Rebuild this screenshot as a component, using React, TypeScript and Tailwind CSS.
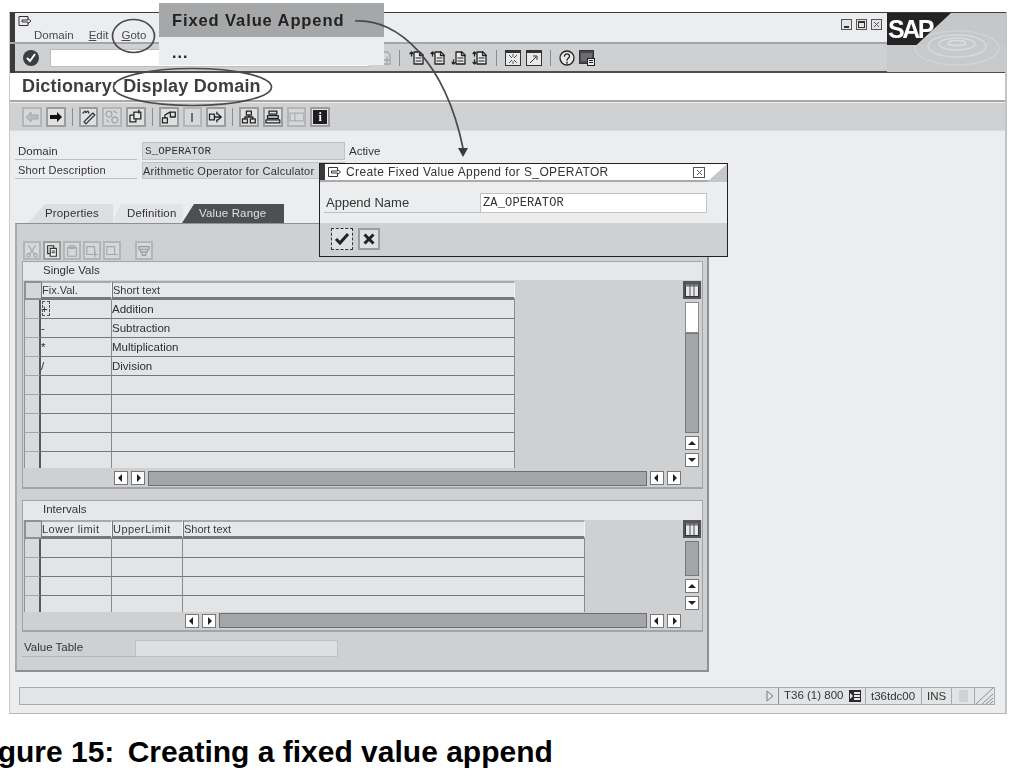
import React from "react";

const S = ({ children, c = "#333", w = 16, h = 16 }: { children: React.ReactNode; c?: string; w?: number; h?: number }) => (
  <svg width={w} height={h} viewBox="0 0 16 16" fill="none" stroke={c} strokeWidth="1.3" strokeLinejoin="round" strokeLinecap="round">
    {children}
  </svg>
);

const Btn = ({ children, dim, small }: { children?: React.ReactNode; dim?: boolean; small?: boolean }) => (
  <div className={`${small ? "w-[18px] h-[19px]" : "w-[19.75px] h-[20px]"} shrink-0 border-2 flex items-center justify-center ${dim ? "border-[#b4b5b7] bg-[#d6d7d9]" : "border-[#9c9d9f] bg-[#dfe0e2]"}`}>
    {children}
  </div>
);

const Sep = () => <div className="w-px h-[18px] mx-[2px] bg-[#8c8d8f] shrink-0" />;

const Tri = ({ dir }: { dir: "l" | "r" | "u" | "d" }) => {
  const p = { l: "6,1 6,9 2,5", r: "4,1 4,9 8,5", u: "1,7 9,7 5,3", d: "1,3 9,3 5,7" }[dir];
  return (
    <svg width="10" height="10" viewBox="0 0 10 10">
      <polygon points={p} fill="#222" />
    </svg>
  );
};

const ScrollBtn = ({ dir }: { dir: "l" | "r" | "u" | "d" }) => (
  <div className="w-[14px] h-[14px] shrink-0 bg-white border border-[#77787a] flex items-center justify-center">
    <Tri dir={dir} />
  </div>
);

const ColBtn = () => (
  <div className="w-[18px] h-[18px] bg-[#d6d7d9] border-2 border-[#55565a] flex items-center justify-center">
    <svg width="14" height="14" viewBox="0 0 14 14">
      <rect x="0.5" y="0.5" width="13" height="13" fill="#e8e9eb" stroke="#333" />
      <rect x="0.5" y="0.5" width="13" height="3" fill="#777" />
      <path d="M5 1v12M9 1v12" stroke="#555" />
    </svg>
  </div>
);

const HScroll = ({ left }: { left: string }) => (
  <div className={`h-[20px] flex items-center gap-[3px] pr-[21px] pb-[1px] ${left}`}>
    <ScrollBtn dir="l" />
    <ScrollBtn dir="r" />
    <div className="flex-1 h-[15px] bg-[#a3a5a7] border border-[#6d6e70]" />
    <ScrollBtn dir="l" />
    <ScrollBtn dir="r" />
  </div>
);

const VScroll = ({ thumb, track }: { thumb: number; track: number }) => (
  <div className="ml-auto mr-[1px] w-[18px] flex flex-col items-center">
    <ColBtn />
    <div className="h-[3px]" />
    {thumb > 0 && <div className="w-[14px] bg-white border border-[#8a8b8d]" style={{ height: thumb }} />}
    <div className="w-[14px] bg-[#a3a5a7] border border-[#77787a]" style={{ height: track }} />
    <div className="h-[3px] shrink-0" />
    <ScrollBtn dir="u" />
    <div className="h-[3px] shrink-0" />
    <ScrollBtn dir="d" />
  </div>
);

const Table = ({ cols, head, rows, height, headTrack = "" }: { cols: string[]; head: string[]; rows: string[][]; height: string; headTrack?: string }) => (
  <div className={`ml-[1px] overflow-hidden ${height}`}>
    <div className="flex h-[19px]">
      <div className="w-[17px] bg-[#d5d6d8] border-2 border-r-0 border-[#8f9092] shrink-0" />
      {head.map((h, i) => (
        <div key={h} className={`${cols[i]} shrink-0 bg-[#e6e7e9] border-t-2 border-t-[#a9aaac] border-l border-l-[#77787a] border-r border-r-[#f4f4f6] border-b-[3px] border-b-[#77787a] text-[11px] leading-[14px] text-[#3a3a3a] ${h === "Short text" ? "" : headTrack}`}>
          {h}
        </div>
      ))}
    </div>
    {rows.map((r, ri) => (
      <div key={ri} className="flex h-[19px]">
        <div className="w-[17px] shrink-0 bg-[#d9dadc] border-l border-l-[#8f9092] border-r-2 border-r-[#58595b] border-b border-b-[#a5a6a8]" />
        {r.map((c, ci) => (
          <div key={ci} className={`${cols[ci]} shrink-0 bg-[#e3e4e6] border-b border-b-[#77787a] border-r border-r-[#8a8b8d] text-[11.5px] leading-[18px] text-[#2e2e2e] whitespace-pre`}>
            {c}
          </div>
        ))}
      </div>
    ))}
  </div>
);

const Logo = () => (
  <div className="absolute left-[877px] top-0 w-[119px] h-[59px] overflow-hidden">
    <div className="absolute left-0 right-0 top-0 h-[31px] bg-[#c6c7c9]" />
    <div className="absolute left-0 right-0 top-[31px] bottom-0 bg-[#c8c9cb]" />
    <svg className="absolute inset-0" width="119" height="59" viewBox="0 0 119 59" fill="none" stroke="#dcdde0">
      <ellipse cx="70" cy="30" rx="9" ry="2.5" strokeWidth="1.4" />
      <ellipse cx="70" cy="31" rx="18" ry="6" strokeWidth="1.4" opacity="0.9" />
      <ellipse cx="70" cy="33" rx="29" ry="11" strokeWidth="1.4" opacity="0.75" />
      <ellipse cx="70" cy="35" rx="42" ry="17" strokeWidth="1.4" opacity="0.5" />
    </svg>
    <div className="absolute left-0 top-0 w-[64px] h-[32px] bg-[#232325] [clip-path:polygon(0_0,100%_0,46%_100%,0_100%)]" />
    <div className="absolute left-[1px] top-0 text-white font-bold text-[25px] leading-[32px] tracking-[-2.5px]">SAP</div>
  </div>
);

const singleRows = [["+", "Addition"], ["-", "Subtraction"], ["*", "Multiplication"], ["/", "Division"], ["", ""], ["", ""], ["", ""], ["", ""], ["", ""]];
const intervalRows = [["", "", ""], ["", "", ""], ["", "", ""], ["", "", ""]];

const Cmd = ({ up, down }: { up?: boolean; down?: boolean }) => (
  <S c="#222">
    <path d="M5 2h6l3 3v9H5z" fill="#e8e9eb" />
    <path d="M10.5 2v3.5H14" />
    {up && <path d="M2.5 6V2M1 3.5l1.5-1.5 1.5 1.5" />}
    {down && <path d="M2.5 10v4M1 12.5L2.5 14 4 12.5" />}
    <path d="M7 8h5M7 11h5" strokeWidth="1" />
  </S>
);

export default function App() {
  return (
    <div className="relative w-[1016px] h-[783px] overflow-hidden bg-white font-['Liberation_Sans',Arial,sans-serif]">
      <div className="pt-[12px] pl-[9px] blur-[0.4px]">
        <div className="relative w-[998px] h-[702px] flex flex-col border-t border-t-[#3d3d3f] border-r-2 border-r-[#c2c3c5] border-l border-l-[#c8c9cb] border-b border-b-[#b5b6b8] bg-[#ecedef]">
          {/* menu bar */}
          <div className="h-[31px] flex bg-[#ecedef] border-b-2 border-b-[#a3a4a6] shrink-0">
            <div className="w-[5px] bg-[#3a3a3c] shrink-0" />
            <div className="pl-[3px] flex-1">
              <div className="h-[14px] pt-[3px]">
                <svg width="14" height="11" viewBox="0 0 14 11" fill="none" stroke="#333" strokeWidth="1">
                  <path d="M1 .5h9v3M1 .5v9h9V7" />
                  <path d="M4 4h6V2.5L13 5l-3 2.5V6H4z" fill="#ecedef" />
                </svg>
              </div>
              <div className="flex text-[11.5px] leading-[15px] mt-[1px] text-[#4a4a4a] ml-[16px]">
                <span>Domain</span>
                <span className="ml-[15px]"><u>E</u>dit</span>
                <span className="ml-[13px]"><u>G</u>oto</span>
              </div>
            </div>
            <div className="flex gap-[4px] pt-[6px] pr-[123px]">
              {["min", "max", "x"].map((k) => (
                <div key={k} className="w-[11px] h-[11px] border border-[#555] bg-[#e3e4e6] relative flex items-center justify-center">
                  {k === "min" && <div className="absolute bottom-[1px] left-[2px] w-[5px] h-[2px] bg-[#333]" />}
                  {k === "max" && <div className="w-[7px] h-[7px] border border-[#333] border-t-2" />}
                  {k === "x" && (
                    <svg width="7" height="7" viewBox="0 0 7 7" stroke="#555"><path d="M1 1l5 5M6 1L1 6" /></svg>
                  )}
                </div>
              ))}
            </div>
          </div>

          {/* system toolbar */}
          <div className="h-[29px] flex items-center bg-[#cfd0d2] border-b-2 border-b-[#4c4d4f] shrink-0 relative">
            <div className="absolute left-0 top-0 bottom-[-2px] w-[5px] bg-[#3a3a3c]" />
            <div className="ml-[13px] w-[16px] h-[16px] rounded-full bg-[#3c3d3f] flex items-center justify-center">
              <svg width="12" height="12" viewBox="0 0 12 12" fill="none" stroke="#fff" strokeWidth="2"><path d="M2 6l3 3 5-7" /></svg>
            </div>
            <div className="ml-[11px] w-[320px] h-[18px] bg-white border border-[#bbbcbe]" />
            <div className="ml-[6px]">
              <S c="#a5a6a8"><path d="M5 2h6l3 3v9H5z" fill="#d6d7d9" /><path d="M11 7v6M8.5 10H13.5" /></S>
            </div>
            <div className="w-px h-[16px] bg-[#8c8d8f] ml-[7px]" />
            <div className="flex gap-[5px] ml-[9px]">
              <Cmd up />
              <Cmd up />
              <Cmd down />
              <Cmd up down />
            </div>
            <div className="w-px h-[16px] bg-[#8c8d8f] ml-[8px]" />
            <div className="flex gap-[5px] ml-[8px]">
              <div className="w-[16px] h-[16px] border border-[#333] bg-[#e8e9eb] border-t-[3px] flex items-center justify-center">
                <svg width="10" height="10" viewBox="0 0 10 10" stroke="#555"><path d="M1 1l3 3M9 1L6 4M1 9l3-3M9 9L6 6M5 0v3M5 7v3" /></svg>
              </div>
              <div className="w-[16px] h-[16px] border border-[#333] bg-[#e8e9eb] border-t-[3px] flex items-center justify-center">
                <svg width="10" height="10" viewBox="0 0 10 10" stroke="#333" fill="none"><path d="M1 9l6-6M4 2h4v4" /></svg>
              </div>
            </div>
            <div className="w-px h-[16px] bg-[#8c8d8f] ml-[8px]" />
            <div className="flex gap-[4px] ml-[8px]">
              <S c="#222">
                <circle cx="8" cy="8" r="7" fill="#e8e9eb" />
                <path d="M5.5 6.2c0-3.2 5-3.2 5 0 0 2-2.5 2-2.5 4" />
                <path d="M8 12.2v1" />
              </S>
              <svg width="16" height="16" viewBox="0 0 16 16">
                <rect x="0.5" y="0.5" width="14" height="13" fill="#4a4b4d" stroke="#333" />
                <rect x="2" y="3" width="11" height="8" fill="#6c6d6f" />
                <rect x="8.5" y="8.5" width="7" height="7" fill="#e8e9eb" stroke="#222" />
                <path d="M10 10.5h4M10 12.5h4" stroke="#222" />
              </svg>
            </div>
          </div>

          {/* title */}
          <div className="h-[29px] bg-white border-b-2 border-b-[#a6a7a9] pl-[12px] text-[18px] font-bold leading-[26px] tracking-[0.18px] text-[#3e3e40] shrink-0">
            Dictionary: Display Domain
          </div>

          {/* app toolbar */}
          <div className="h-[28px] flex items-center gap-[4px] bg-[#d0d1d3] pl-[12px] border-b border-b-[#d9dadc] shrink-0 mt-px">
            <Btn dim>
              <svg width="14" height="12" viewBox="0 0 14 12"><polygon points="1,6 6,1 6,4 13,4 13,8 6,8 6,11" fill="#bbbcbe" stroke="#a5a6a8" /></svg>
            </Btn>
            <Btn>
              <svg width="14" height="12" viewBox="0 0 14 12"><polygon points="13,6 8,1 8,4 1,4 1,8 8,8 8,11" fill="#111" /></svg>
            </Btn>
            <Sep />
            <Btn>
              <S c="#333"><path d="M3 13l9-9 2 2-9 9zM2 4l2-2 1 1.5L7 2l1 2" /></S>
            </Btn>
            <Btn dim>
              <S c="#a5a6a8"><circle cx="5" cy="5" r="3" /><circle cx="11" cy="11" r="3" /><path d="M10 2l3 2M3 11l2 2" /></S>
            </Btn>
            <Btn>
              <S c="#222"><rect x="2" y="6" width="6" height="7" fill="#e8e9eb" /><rect x="6" y="3" width="7" height="7" fill="#e8e9eb" /><path d="M11 1v3" /></S>
            </Btn>
            <Sep />
            <Btn>
              <S c="#222"><rect x="1.5" y="9" width="5" height="5" /><rect x="9.5" y="3" width="5" height="5" /><path d="M4 9V6l5-3" /></S>
            </Btn>
            <Btn dim>
              <svg width="4" height="12" viewBox="0 0 4 12"><path d="M2 2v9" stroke="#555" strokeWidth="1.6" /></svg>
            </Btn>
            <Btn>
              <S c="#222"><rect x="1.5" y="5" width="5" height="6" /><path d="M6.5 8H13M10 5l3.5 3-3.5 3M9 3v2M9 11v2" /></S>
            </Btn>
            <Sep />
            <Btn>
              <S c="#222"><rect x="5.5" y="2" width="5" height="4" /><rect x="1.5" y="10" width="5" height="4" /><rect x="9.5" y="10" width="5" height="4" /><path d="M8 6v2M4 10V8h8v2" /></S>
            </Btn>
            <Btn>
              <S c="#222"><rect x="4" y="2" width="8" height="3" /><rect x="2.5" y="6.5" width="11" height="3" /><rect x="1" y="11" width="14" height="3" /></S>
            </Btn>
            <Btn dim>
              <S c="#aeafb1"><rect x="1" y="4" width="14" height="8" /><path d="M6 4v8" /></S>
            </Btn>
            <Btn>
              <div className="w-[14px] h-[14px] bg-[#1e1e20] flex items-center justify-center text-white text-[12px] font-bold leading-none font-['Liberation_Serif',serif]">i</div>
            </Btn>
          </div>

          {/* content */}
          <div className="flex-1 flex flex-col pl-[5px] pt-[11px] bg-[#ecedef] text-[#333]">
            <div className="flex h-[18px] w-[400px]">
              <div className="w-[122px] pl-[3px] text-[11.5px] leading-[18px] border-b border-b-[#bdbec0] mr-[5px] shrink-0">Domain</div>
              <div className="w-[203px] shrink-0 bg-[#d8d9db] border border-[#c0c1c3] pl-[2px] font-['Liberation_Mono',monospace] text-[11px] leading-[16px]">S_OPERATOR</div>
              <div className="ml-[4px] text-[11.5px] leading-[18px]">Active</div>
            </div>
            <div className="flex h-[17px] mt-[2px]">
              <div className="w-[122px] pl-[3px] text-[11px] leading-[17px] tracking-[0.2px] border-b border-b-[#bdbec0] mr-[5px] shrink-0 whitespace-nowrap">Short Description</div>
              <div className="w-[203px] shrink-0 bg-[#d8d9db] border border-[#c0c1c3] text-[11px] leading-[17px] tracking-[0.22px] whitespace-nowrap overflow-hidden">Arithmetic Operator for Calculator</div>
            </div>

            {/* tabs */}
            <div className="flex h-[19px] mt-[25px] pl-[13px] text-[11.5px] leading-[19px] tracking-[0.15px] shrink-0">
              <div className="w-[85px] pl-[17px] bg-[#dddee0] [clip-path:polygon(17px_0,100%_0,100%_100%,0_100%)] text-[#333]">Properties</div>
              <div className="w-[71px] pl-[15px] -ml-[1px] bg-[#e3e4e6] [clip-path:polygon(9px_0,100%_0,100%_100%,0_100%)] text-[#333]">Definition</div>
              <div className="w-[102px] -ml-[1px] pl-[17px] bg-[#4e4f51] [clip-path:polygon(12px_0,100%_0,100%_100%,0_100%)] text-[#dfe0e2]">Value Range</div>
            </div>

            {/* panel */}
            <div className="w-[694px] h-[449px] bg-[#cfd0d2] border-t border-t-[#8f9092] border-l-2 border-l-[#a9aaac] border-r-2 border-r-[#8f9092] border-b-2 border-b-[#8f9092] shrink-0">
              <div className="flex gap-[2px] pt-[17px] pl-[6px] h-[37px]">
                <Btn small dim><S c="#a5a6a8"><path d="M4 2l7 10M12 2L5 12" /><circle cx="4" cy="13" r="2" /><circle cx="12" cy="13" r="2" /></S></Btn>
                <Btn small><S c="#333"><rect x="3" y="2" width="7" height="9" /><rect x="6" y="5" width="7" height="9" fill="#fff" /><path d="M8 8h3M8 10h3" /></S></Btn>
                <Btn small dim><S c="#a5a6a8"><rect x="3" y="4" width="10" height="10" /><rect x="5" y="2" width="6" height="3" /></S></Btn>
                <Btn small dim><S c="#a5a6a8"><rect x="2" y="3" width="9" height="9" /><path d="M9 12h5M11.5 9.5v5" /></S></Btn>
                <Btn small dim><S c="#a5a6a8"><rect x="2" y="3" width="9" height="9" /><path d="M9 12h5" /></S></Btn>
                <div className="ml-[12px]">
                  <Btn small dim><S c="#98999b"><path d="M2 3h12v3H2zM4 6h8v3H4zM6 9h4v4H6z" /></S></Btn>
                </div>
              </div>

              {/* single vals */}
              <div className="ml-[5px] w-[681px] h-[228px] border-t border-x border-b-2 border-[#a3a4a6] flex flex-col">
                <div className="h-[18px] bg-[#e6e7e9] pl-[20px] text-[11.5px] leading-[17px] shrink-0">Single Vals</div>
                <div className="flex h-[189px] pt-[1px] shrink-0">
                  <Table cols={["w-[71px]", "w-[403px]"]} head={["Fix.Val.", "Short text"]} rows={singleRows} height="h-[187px]" />
                  <VScroll thumb={31} track={100} />
                </div>
                <div className="h-px shrink-0" />
                <HScroll left="pl-[91px]" />
              </div>

              {/* intervals */}
              <div className="ml-[5px] mt-[11px] w-[681px] h-[132px] border-t border-x border-b-2 border-[#a3a4a6] flex flex-col">
                <div className="h-[19px] bg-[#e6e7e9] pl-[20px] text-[11.5px] leading-[17px] shrink-0">Intervals</div>
                <div className="flex h-[92px] shrink-0">
                  <Table cols={["w-[71px]", "w-[71px]", "w-[402px]"]} head={["Lower limit", "UpperLimit", "Short text"]} rows={intervalRows} height="h-[92px]" headTrack="tracking-[0.45px]" />
                  <VScroll thumb={0} track={35} />
                </div>
                <HScroll left="pl-[162px]" />
              </div>

              <div className="flex h-[17px] mt-[8px] ml-[5px]">
                <div className="w-[113px] pl-[2px] text-[11.5px] leading-[15px] border-b border-b-[#b3b4b6] shrink-0">Value Table</div>
                <div className="w-[203px] bg-[#dedfe1] border border-[#bfc0c2]" />
              </div>
            </div>

            {/* status bar */}
            <div className="ml-[4px] mt-[15px] w-[976px] h-[18px] flex items-center bg-[#e3e4e6] border border-[#a9aaac] text-[11.5px] text-[#333] shrink-0">
              <div className="ml-auto flex items-center h-full">
                <svg width="8" height="12" viewBox="0 0 8 12" fill="none" stroke="#77787a"><path d="M1 1l6 5-6 5z" /></svg>
                <div className="w-px h-full bg-[#8f9092] ml-[4px]" />
                <div className="w-[87px] flex items-center pl-[5px] h-full border-r border-r-[#a9aaac]">
                  <span>T36 (1) 800</span>
                  <div className="ml-[6px] w-[12px] h-[12px] bg-[#2a2a2c] flex items-center justify-center">
                    <svg width="10" height="10" viewBox="0 0 10 10"><path d="M4 1h6v2H4zM4 4h6v2H4zM4 7h6v2H4z" fill="#e8e9eb" /><polygon points="0,2 3,5 0,8" fill="#e8e9eb" /></svg>
                  </div>
                </div>
                <div className="w-[56px] pl-[5px] border-r border-r-[#a9aaac] h-full leading-[16px]">t36tdc00</div>
                <div className="w-[30px] pl-[5px] border-r border-r-[#a9aaac] h-full leading-[16px]">INS</div>
                <div className="w-[23px] border-r border-r-[#a9aaac] h-full flex items-center justify-center">
                  <div className="w-[9px] h-[12px] bg-[#d0d1d3]" />
                </div>
                <svg width="19" height="16" viewBox="0 0 19 16" fill="none" stroke="#8f9092">
                  <path d="M1 16L18 0" />
                  <path d="M7 16L18 6M11 16l7-6M15 16l3-3" />
                </svg>
              </div>
            </div>
          </div>

          <Logo />
        </div>
      </div>

      <div className="mt-[22px] -ml-[29px] text-[30px] leading-[32px] font-bold text-black whitespace-nowrap">
        Figure 15: <span className="ml-[5px]">Creating a fixed value append</span>
      </div>

      <div className="absolute inset-0 pointer-events-none blur-[0.4px]">
        {/* goto menu overlay */}
        <div className="absolute left-[159px] top-[3px] w-[225px] h-[62px] bg-[#ecedef] text-[#222]">
          <div className="h-[34px] bg-[#a5a7a9] pl-[13px] text-[16.5px] font-bold leading-[34px] tracking-[0.9px]">Fixed Value Append</div>
          <div className="pl-[13px] text-[16px] font-bold leading-[32px] tracking-[1px]">...</div>
        </div>

        {/* dialog */}
        <div className="absolute left-[319px] top-[163px] w-[409px] h-[94px] border border-[#222] bg-[#ecedef] flex flex-col text-[#333]">
          <div className="h-[18px] flex items-center bg-white relative border-b-2 border-b-[#a9aaac] shrink-0">
            <div className="w-[5px] h-full bg-[#3a3a3c]" />
            <svg className="ml-[2px]" width="15" height="11" viewBox="0 0 14 11" fill="none" stroke="#333" strokeWidth="1">
              <path d="M1 .5h9v3M1 .5v9h9V7" />
              <path d="M4 4h6V2.5L13 5l-3 2.5V6H4z" fill="#fff" />
            </svg>
            <span className="ml-[4px] text-[12px] tracking-[0.38px] leading-[16px]">Create Fixed Value Append for S_OPERATOR</span>
            <div className="absolute left-[373px] top-[3px] w-[12px] h-[11px] border border-[#555] flex items-center justify-center">
              <svg width="7" height="7" viewBox="0 0 7 7" stroke="#555"><path d="M1 1l5 5M6 1L1 6" /></svg>
            </div>
            <div className="absolute right-0 top-0 w-[20px] h-[18px] bg-[#c5c6c8] [clip-path:polygon(100%_0,100%_100%,0_100%)]" />
          </div>
          <div className="flex h-[41px] items-start pt-[11px] shrink-0">
            <div className="ml-[4px] w-[156px] text-[13px] leading-[19px] border-b border-b-[#bdbec0] pl-[2px] h-[20px] shrink-0">Append Name</div>
            <div className="w-[227px] h-[20px] bg-white border border-[#c0c1c3] pl-[2px] font-['Liberation_Mono',monospace] text-[12px] tracking-[0.15px] leading-[18px]">ZA_OPERATOR</div>
          </div>
          <div className="flex-1 bg-[#cfd0d2] flex items-center gap-[5px] pl-[11px] pb-[1px]">
            <div className="w-[22px] h-[22px] border border-dashed border-[#333] bg-[#dfe0e2] flex items-center justify-center">
              <svg width="16" height="14" viewBox="0 0 16 14" fill="none" stroke="#222" strokeWidth="3"><path d="M2 7l4 4 8-9" /></svg>
            </div>
            <div className="w-[22px] h-[22px] border-2 border-[#9c9d9f] bg-[#dfe0e2] flex items-center justify-center">
              <svg width="12" height="12" viewBox="0 0 12 12" fill="none" stroke="#222" strokeWidth="3"><path d="M1.5 1.5l9 9M10.5 1.5l-9 9" /></svg>
            </div>
          </div>
        </div>

        {/* focus marker on + cell */}
        <div className="absolute left-[42px] top-[301px] w-[8px] h-[15px] border border-dashed border-[#555]" />

        {/* annotation */}
        <svg className="absolute inset-0" width="1016" height="783" viewBox="0 0 1016 783" fill="none" stroke="#4a4a4c" strokeWidth="1.7">
          <ellipse cx="133.5" cy="36" rx="21" ry="16.5" />
          <ellipse cx="192.5" cy="87" rx="79" ry="18.5" />
          <path d="M355 21C398 18 445 62 463 148" />
          <polygon points="458,148 468,148 463,157" fill="#3a3a3c" stroke="none" />
        </svg>
      </div>
    </div>
  );
}
